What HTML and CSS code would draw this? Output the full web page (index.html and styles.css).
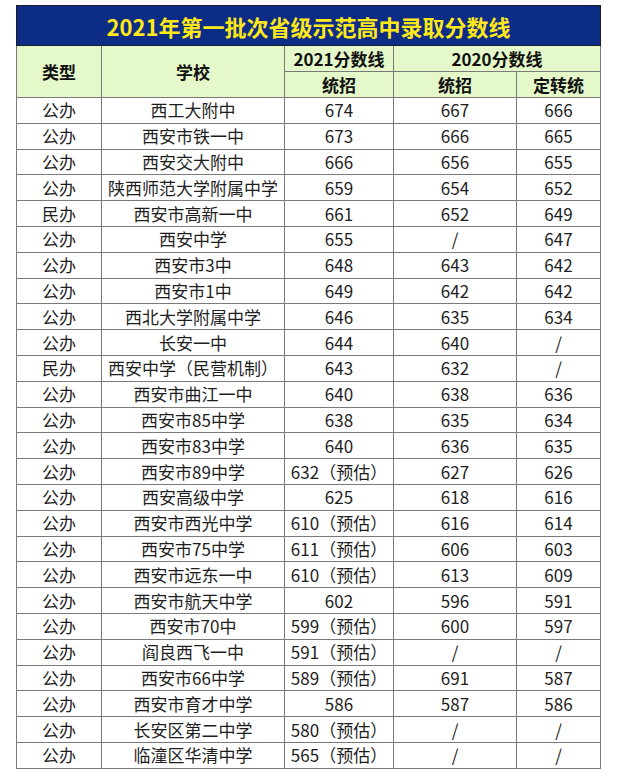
FILE: index.html
```html
<!DOCTYPE html>
<html lang="zh-CN">
<head>
<meta charset="utf-8">
<title>2021年第一批次省级示范高中录取分数线</title>
<link rel="stylesheet" href="styles.css">
</head>
<body>
<div class="page">
  <table class="scores">
    <colgroup>
      <col class="c-type"><col class="c-school"><col class="c-2021"><col class="c-2020a"><col class="c-2020b">
    </colgroup>
    <thead>
      <tr class="title-row"><th colspan="5" class="title">2021年第一批次省级示范高中录取分数线</th></tr>
      <tr class="head-row">
        <th rowspan="2">类型</th>
        <th rowspan="2">学校</th>
        <th>2021分数线</th>
        <th colspan="2">2020分数线</th>
      </tr>
      <tr class="head-row">
        <th>统招</th>
        <th>统招</th>
        <th>定转统</th>
      </tr>
    </thead>
    <tbody>
      <tr><td>公办</td><td>西工大附中</td><td>674</td><td>667</td><td>666</td></tr>
      <tr><td>公办</td><td>西安市铁一中</td><td>673</td><td>666</td><td>665</td></tr>
      <tr><td>公办</td><td>西安交大附中</td><td>666</td><td>656</td><td>655</td></tr>
      <tr><td>公办</td><td>陕西师范大学附属中学</td><td>659</td><td>654</td><td>652</td></tr>
      <tr><td>民办</td><td>西安市高新一中</td><td>661</td><td>652</td><td>649</td></tr>
      <tr><td>公办</td><td>西安中学</td><td>655</td><td>/</td><td>647</td></tr>
      <tr><td>公办</td><td>西安市3中</td><td>648</td><td>643</td><td>642</td></tr>
      <tr><td>公办</td><td>西安市1中</td><td>649</td><td>642</td><td>642</td></tr>
      <tr><td>公办</td><td>西北大学附属中学</td><td>646</td><td>635</td><td>634</td></tr>
      <tr><td>公办</td><td>长安一中</td><td>644</td><td>640</td><td>/</td></tr>
      <tr><td>民办</td><td>西安中学（民营机制）</td><td>643</td><td>632</td><td>/</td></tr>
      <tr><td>公办</td><td>西安市曲江一中</td><td>640</td><td>638</td><td>636</td></tr>
      <tr><td>公办</td><td>西安市85中学</td><td>638</td><td>635</td><td>634</td></tr>
      <tr><td>公办</td><td>西安市83中学</td><td>640</td><td>636</td><td>635</td></tr>
      <tr><td>公办</td><td>西安市89中学</td><td>632（预估）</td><td>627</td><td>626</td></tr>
      <tr><td>公办</td><td>西安高级中学</td><td>625</td><td>618</td><td>616</td></tr>
      <tr><td>公办</td><td>西安市西光中学</td><td>610（预估）</td><td>616</td><td>614</td></tr>
      <tr><td>公办</td><td>西安市75中学</td><td>611（预估）</td><td>606</td><td>603</td></tr>
      <tr><td>公办</td><td>西安市远东一中</td><td>610（预估）</td><td>613</td><td>609</td></tr>
      <tr><td>公办</td><td>西安市航天中学</td><td>602</td><td>596</td><td>591</td></tr>
      <tr><td>公办</td><td>西安市70中</td><td>599（预估）</td><td>600</td><td>597</td></tr>
      <tr><td>公办</td><td>阎良西飞一中</td><td>591（预估）</td><td>/</td><td>/</td></tr>
      <tr><td>公办</td><td>西安市66中学</td><td>589（预估）</td><td>691</td><td>587</td></tr>
      <tr><td>公办</td><td>西安市育才中学</td><td>586</td><td>587</td><td>586</td></tr>
      <tr><td>公办</td><td>长安区第二中学</td><td>580（预估）</td><td>/</td><td>/</td></tr>
      <tr><td>公办</td><td>临潼区华清中学</td><td>565（预估）</td><td>/</td><td>/</td></tr>
    </tbody>
  </table>
</div>
</body>
</html>
```
FILE: styles.css
```css
html, body {
  margin: 0;
  padding: 0;
  background: #ffffff;
}
.page {
  padding: 5px 0 0 16px;
}
.scores {
  border-collapse: collapse;
  table-layout: fixed;
  width: 584px;
  font-family: "Noto Sans CJK SC", "Noto Sans", sans-serif;
  color: #1e1e1e;
}
.c-type { width: 85px; }
.c-school { width: 183px; }
.c-2021 { width: 109px; }
.c-2020a { width: 123px; }
.c-2020b { width: 84px; }

.scores th, .scores td {
  border: 1px solid #7a7a7a;
  padding: 0;
  text-align: center;
  white-space: nowrap;
  overflow: hidden;
}
.title-row th.title {
  height: 39px;
  background: #0c2c86;
  color: #ffe819;
  font-size: 22px;
  font-weight: 700;
  border: 1px solid #1a1a2a;
  letter-spacing: 0;
}
.head-row th {
  height: 25px;
  background: #e5f8c9;
  font-size: 17px;
  font-weight: 700;
  color: #111;
  line-height: 24px;
}
.scores td {
  height: 24.8px;
  font-size: 17px;
  line-height: 24px;
  font-weight: 400;
}
```
